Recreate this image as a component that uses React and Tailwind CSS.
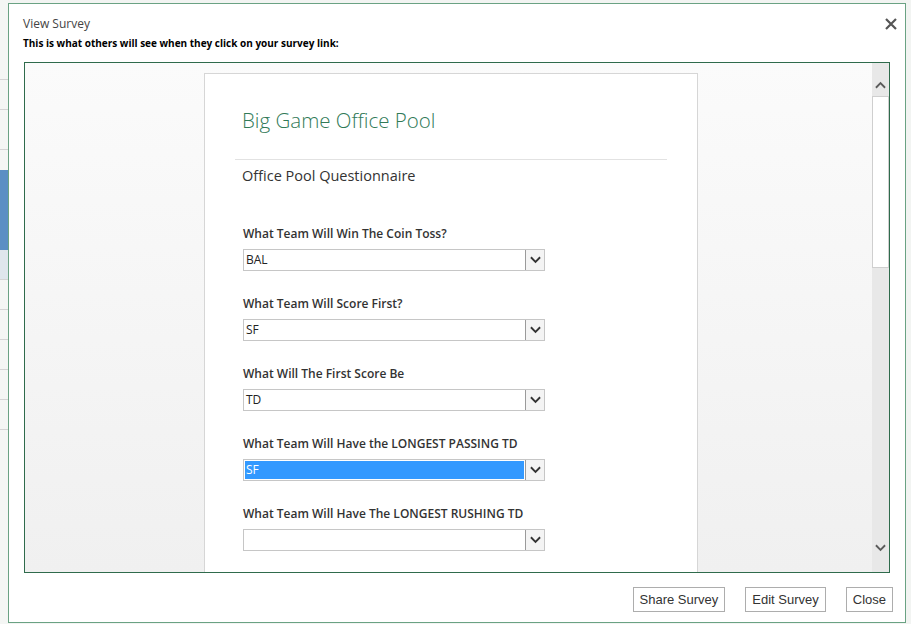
import React from 'react';

const questions = [
  { label: 'What Team Will Win The Coin Toss?', value: 'BAL' },
  { label: 'What Team Will Score First?', value: 'SF' },
  { label: 'What Will The First Score Be', value: 'TD' },
  { label: 'What Team Will Have the LONGEST PASSING TD', value: 'SF', selected: true },
  { label: 'What Team Will Have The LONGEST RUSHING TD', value: '' },
];

const font = { fontFamily: '"Open Sans", "Noto Sans", Arial, sans-serif' };

function Chevron({ up = false, className = '' }) {
  return (
    <svg viewBox="0 0 12 8" className={className} fill="none" stroke="currentColor" strokeWidth="2">
      {up ? <path d="M1 7 L6 2 L11 7" /> : <path d="M1 1 L6 6 L11 1" />}
    </svg>
  );
}

function SelectBox({ value, selected }) {
  return (
    <div className="flex h-[22px] w-[302px] border border-[#c6c6c6] bg-white">
      <div
        className={
          selected
            ? 'm-px flex flex-1 items-center bg-[#3399ff] pl-px text-[12px] text-white'
            : 'flex flex-1 items-center pl-[2px] text-[12px] text-[#222]'
        }
      >
        {value}
      </div>
      <div className="flex w-[19px] items-center justify-center border-l border-[#9a9a9a] bg-[#f4f4f4]">
        <Chevron className="h-[8px] w-[11px] text-[#333]" />
      </div>
    </div>
  );
}

export default function App() {
  return (
    <div className="flex h-[624px] w-[911px] overflow-hidden bg-[#f2f4f2]" style={font}>
      {/* sheet peeking out behind the dialog */}
      <div className="flex w-[8px] flex-col bg-[#f4f6f4]">
        <div className="h-[80px] border-b border-[#d4d4d4]" />
        <div className="h-[30px] border-b border-[#d4d4d4]" />
        <div className="h-[40px] border-b border-[#d4d4d4]" />
        <div className="h-[20px]" />
        <div className="h-[80px] bg-[#5b8fc4]" />
        <div className="h-[30px] border-b border-[#d4d4d4] bg-[#dfe6ec]" />
        <div className="h-[30px] border-b border-[#d4d4d4]" />
        <div className="h-[30px] border-b border-[#d4d4d4]" />
        <div className="h-[30px] border-b border-[#d4d4d4]" />
        <div className="h-[30px] border-b border-[#d4d4d4]" />
        <div className="h-[30px] border-b border-[#d4d4d4]" />
      </div>

      <div className="flex-1 pt-[3px] pr-[5px] pb-px">
        <div className="relative flex h-full flex-col border border-[#6aa283] bg-white">
          <button className="absolute top-[14px] right-[8px] text-[#555]">
            <svg viewBox="0 0 12 12" className="h-[12px] w-[12px]" stroke="currentColor" strokeWidth="2.2">
              <path d="M1 1 L11 11 M11 1 L1 11" />
            </svg>
          </button>

          <div className="px-[14px] pt-[12px]">
            <div className="text-[12px] leading-[16px] text-[#444]">View Survey</div>
            <div className="mt-[4px] text-[10px] leading-[14px] font-bold text-black">
              This is what others will see when they click on your survey link:
            </div>
          </div>

          <div className="mx-[15px] mt-[12px] flex h-[511px] border border-[#2f6b4c]">
            <div className="flex-1 overflow-hidden bg-gradient-to-b from-[#fbfbfb] to-[#f0f0f0] pl-[179px]">
              <div className="mt-[10px] h-[520px] w-[494px] border border-[#d6d6d6] bg-white">
                <h1 className="pt-[31px] pl-[37px] text-[20.5px] leading-[30px] font-light text-[#317a57]">
                  Big Game Office Pool
                </h1>
                <div className="mx-[30px] mt-[24px] border-t border-[#e2e2e2]" />
                <div className="pt-[6px] pl-[37px] text-[14.5px] leading-[20px] text-[#333]">
                  Office Pool Questionnaire
                </div>
                <div className="pl-[38px]">
                  {questions.map((q, i) => (
                    <div key={i} className={i === 0 ? 'pt-[40px]' : 'pt-[25px]'}>
                      <div className="text-[12px] leading-[16px] font-semibold text-[#333]">{q.label}</div>
                      <div className="mt-[7px]">
                        <SelectBox value={q.value} selected={q.selected} />
                      </div>
                    </div>
                  ))}
                </div>
              </div>
            </div>

            <div className="flex w-[17px] flex-col bg-[#e8e8e8]">
              <div className="flex h-[33px] items-start justify-center pt-[18px]">
                <Chevron up className="h-[8px] w-[11px] text-[#5a5a5a]" />
              </div>
              <div className="h-[172px] border border-[#cfcfcf] bg-white" />
              <div className="flex-1" />
              <div className="flex h-[32px] items-center justify-center pb-[16px]">
                <Chevron className="h-[8px] w-[11px] text-[#5a5a5a]" />
              </div>
            </div>
          </div>

          <div className="flex justify-end gap-[20px] pt-[14px] pr-[12px]">
            {['Share Survey', 'Edit Survey', 'Close'].map((b) => (
              <button
                key={b}
                className="h-[25px] border border-[#adadad] bg-white px-[6px] text-[13px] text-[#333]"
                style={{ fontFamily: '"Liberation Sans", Arial, sans-serif' }}
              >
                {b}
              </button>
            ))}
          </div>
        </div>
      </div>
    </div>
  );
}
